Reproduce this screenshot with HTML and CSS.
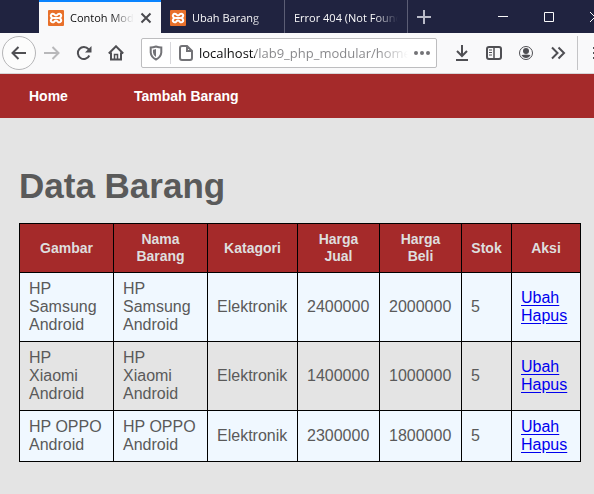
FILE: index.html
```html
<!DOCTYPE html>
<html lang="id">
<head>
<meta charset="utf-8">
<title>Contoh Modular</title>
<link rel="stylesheet" href="styles.css">
</head>
<body>
<svg class="defs" aria-hidden="true">
  <symbol id="xampp" viewBox="0 0 16 16">
    <rect width="16" height="16" rx="1" fill="#e8702a"/>
    <path d="M3 4.6Q4.600 3 6.200 4.300Q8 6.500 9.800 4.300Q11.400 3 13 4.600Q13.800 6.300 11.600 8Q13.800 9.700 13 11.400Q11.400 13 9.800 11.700Q8 9.500 6.200 11.700Q4.600 13 3 11.400Q2.200 9.700 4.400 8Q2.200 6.300 3 4.600M5.200 8H10.800" fill="none" stroke="#fff" stroke-width="2"/>
  </symbol>
</svg>
<header class="browser">
  <div class="tabbar">
    <div class="tab active">
      <svg class="favicon"><use href="#xampp"/></svg>
      <span class="tab-title">Contoh Modular</span>
      <button class="tab-close" aria-label="Tutup tab"><svg width="12" height="12" viewBox="0 0 12 12"><path d="M1.500 1.500 10.500 10.500M10.500 1.500 1.500 10.500"/></svg></button>
    </div>
    <div class="tab">
      <svg class="favicon"><use href="#xampp"/></svg>
      <span class="tab-title">Ubah Barang</span>
    </div>
    <div class="tab divided">
      <span class="tab-title">Error 404 (Not Found)</span>
    </div>
    <button class="new-tab" aria-label="Tab baru"><svg width="14" height="14" viewBox="0 0 14 14"><path d="M7 0V14M0 7H14"/></svg></button>
    <div class="window-buttons">
      <button aria-label="Minimalkan"><svg width="10" height="10" viewBox="0 0 10 10"><path d="M0 4.500H10"/></svg></button>
      <button aria-label="Maksimalkan"><svg width="10" height="10" viewBox="0 0 10 10"><path d="M.5 .5H9.500V9.500H.5Z"/></svg></button>
      <button class="window-close" aria-label="Tutup"><svg width="10" height="10" viewBox="0 0 10 10"><path d="M0 0 10 10M10 0 0 10"/></svg></button>
    </div>
  </div>
  <div class="toolbar">
    <button class="back" aria-label="Kembali"><svg width="16" height="16" viewBox="0 0 16 16"><path d="M15 8H1.500M7.500 2 1.500 8 7.500 14"/></svg></button>
    <button class="tool disabled" aria-label="Maju"><svg width="16" height="16" viewBox="0 0 16 16"><path d="M0 8H14.500M8.500 2 14.500 8 8.500 14"/></svg></button>
    <button class="tool" aria-label="Muat ulang"><svg width="16" height="16" viewBox="0 0 16 16"><path d="M13.300 10.500A6 6 0 1 1 12.500 4.200L14 6"/><path class="solid" d="M15.500 1V7.500H9Z"/></svg></button>
    <button class="tool" aria-label="Beranda"><svg width="16" height="16" viewBox="0 0 16 16"><path d="M.8 8.500 8 1.300 15.200 8.500M3 7.500V14.500H13V7.500"/><path d="M6.500 14V9.500H9.500V14" stroke-width="1.500"/></svg></button>
    <div class="address">
      <svg class="shield" width="16" height="16" viewBox="0 0 16 16"><path d="M8 1.500Q11 2.400 13.300 2.500V7.500Q13 12 8 14.500Q3 12 2.700 7.500V2.500Q5 2.400 8 1.500Z"/><path class="solid" d="M8 4Q6.600 4.600 5 4.700V7.500Q5.200 10.500 8 12Z"/></svg>
      <svg class="page-icon" width="16" height="16" viewBox="0 0 16 16"><path d="M4 1H9L14 6V13Q14 15 12 15H4Q2 15 2 13V3Q2 1 4 1ZM9 1V6H14"/></svg>
      <input class="url" type="text" aria-label="Alamat" value="localhost/lab9_php_modular/home">
      <button class="more" aria-label="Tindakan halaman"><svg width="16" height="4" viewBox="0 0 16 4"><circle cx="2" cy="2" r="2"/><circle cx="8" cy="2" r="2"/><circle cx="14" cy="2" r="2"/></svg></button>
    </div>
    <button class="tool" aria-label="Unduhan"><svg width="16" height="16" viewBox="0 0 16 16"><path d="M8 0V11M3 6 8 11 13 6M2 15H14"/></svg></button>
    <button class="tool" aria-label="Bilah sisi"><svg width="16" height="16" viewBox="0 0 16 16"><rect x="1" y="2" width="14" height="12" rx="2"/><path d="M8 2V14" stroke-width="1.500"/><path d="M3 5H6M3 7.500H6M3 10H6" stroke-width="1"/></svg></button>
    <button class="tool" aria-label="Akun"><svg width="16" height="16" viewBox="0 0 16 16"><circle cx="8" cy="8" r="6.500" stroke-width="1"/><circle class="solid" cx="8" cy="6" r="3"/><path class="solid" d="M3.500 10Q8 9 12.500 10Q11 13 8 13Q5 13 3.500 10Z"/></svg></button>
    <button class="tool" aria-label="Lainnya"><svg width="16" height="16" viewBox="0 0 16 16"><path d="M2 2.500 7.500 8 2 13.500M8.500 2.500 14 8 8.500 13.500"/></svg></button>
    <button class="menu" aria-label="Menu"><svg width="16" height="16" viewBox="0 0 16 16"><path d="M1 3H15M1 8H15M1 13H15"/></svg></button>
  </div>
</header>
<nav class="site-nav">
  <a href="#home">Home</a>
  <a href="#tambah">Tambah Barang</a>
</nav>
<main class="content">
  <h1>Data Barang</h1>
  <table>
    <colgroup><col class="c-text"><col class="c-text"><col class="c-category"><col class="c-price"><col class="c-price"><col class="c-stock"><col class="c-action"></colgroup>
    <thead>
      <tr><th>Gambar</th><th>Nama Barang</th><th>Katagori</th><th>Harga Jual</th><th>Harga Beli</th><th>Stok</th><th>Aksi</th></tr>
    </thead>
    <tbody>
      <tr><td>HP Samsung Android</td><td>HP Samsung Android</td><td>Elektronik</td><td>2400000</td><td>2000000</td><td>5</td><td><a href="#ubah">Ubah</a> <a href="#hapus">Hapus</a></td></tr>
      <tr><td>HP Xiaomi Android</td><td>HP Xiaomi Android</td><td>Elektronik</td><td>1400000</td><td>1000000</td><td>5</td><td><a href="#ubah">Ubah</a> <a href="#hapus">Hapus</a></td></tr>
      <tr><td>HP OPPO Android</td><td>HP OPPO Android</td><td>Elektronik</td><td>2300000</td><td>1800000</td><td>5</td><td><a href="#ubah">Ubah</a> <a href="#hapus">Hapus</a></td></tr>
    </tbody>
  </table>
</main>
</body>
</html>
```
FILE: styles.css
```css
* { box-sizing: border-box; }

body {
  margin: 0;
  min-height: 100vh;
  overflow-x: hidden;
  background: #e4e4e4;
  color: #5a5a5a;
  font: 16px/18px "Liberation Sans", Arial, sans-serif;
}

button {
  display: flex;
  align-items: center;
  justify-content: center;
  flex: none;
  padding: 0;
  border: 0;
  background: none;
  color: inherit;
}

svg { flex: none; fill: none; stroke: currentColor; stroke-width: 2; }
.solid { fill: currentColor; stroke: none; }
.defs { display: none; }

.browser { font-family: "Open Sans", "Noto Sans", sans-serif; }

.tabbar {
  display: flex;
  height: 33px;
  padding-left: 39px;
  overflow: hidden;
  background: #202340;
  color: #f9f9fa;
}

.tab {
  display: flex;
  flex: 0 0 123px;
  align-items: center;
  gap: 6px;
  min-width: 0;
  padding: 2px 9px 0;
  font-size: 11px;
}

.tab.active {
  flex-basis: 122px;
  padding-top: 0;
  border-top: 2px solid #0a84ff;
  background: #f9f9fa;
  color: #0c0c0d;
}

.tab.divided {
  flex-basis: 124px;
  border: solid #5c5e75;
  border-width: 0 1px;
}

.favicon { width: 16px; height: 16px; stroke: none; }

.tab-title {
  flex: 1;
  min-width: 0;
  overflow: hidden;
  white-space: nowrap;
  mask-image: linear-gradient(to left, transparent, #000 24px);
}

.tab-close { width: 12px; color: #4a4a4f; }
.new-tab { width: 32px; color: #b9bac8; }
.window-buttons { display: flex; margin-left: auto; margin-right: -24px; }
.window-buttons button { width: 46px; }
.window-buttons svg { stroke-width: 1; }

.toolbar {
  display: flex;
  align-items: center;
  height: 41px;
  padding-left: 2px;
  overflow: hidden;
  border-bottom: 1px solid #d6d6d8;
  background: #f9f9fa;
  color: #4f4f53;
}

.back {
  width: 34px;
  height: 34px;
  border: 1px solid #b5b5b7;
  border-radius: 50%;
  background: #fcfcfc;
}

.tool { width: 32px; height: 32px; }
.disabled { color: #b8b8ba; }

.address {
  display: flex;
  flex: 1;
  align-items: center;
  min-width: 0;
  height: 30px;
  margin: 0 9px;
  padding: 0 6px;
  border: 1px solid #bdbdbf;
  border-radius: 2px;
  background: #fff;
  color: #737377;
}

.page-icon {
  width: 24px;
  height: 22px;
  margin: 0 5px 0 6px;
  padding: 3px 0 3px 7px;
  border-left: 1px solid #d7d7db;
}

.url {
  flex: 1;
  min-width: 0;
  padding: 0;
  border: 0;
  outline: 0;
  background: linear-gradient(to right, #0c0c0d 56px, #858588 56px, #858588 calc(100% - 30px), transparent);
  background-clip: text;
  color: transparent;
  font: 13px/20px "Open Sans", "Noto Sans", sans-serif;
}

.more { width: 16px; margin-left: 6px; }
.more svg { fill: currentColor; stroke: none; }

.menu {
  justify-content: flex-start;
  width: 17px;
  height: 34px;
  margin-left: 3px;
  padding-left: 14px;
  overflow: hidden;
  border-left: 1px solid #c4c4c6;
}

.site-nav {
  display: flex;
  background: #a52a2a;
}

.site-nav a {
  padding: 13px 37px 13px 29px;
  color: #fff;
  font-size: 14px;
  font-weight: bold;
  text-decoration: none;
}

.content { padding: 48px 13px 32px 19px; }

h1 {
  margin: 0 0 17px;
  font-size: 35px;
  line-height: 40px;
}

table {
  width: 100%;
  table-layout: fixed;
  border-collapse: collapse;
}

.c-text { width: 94px; }
.c-category { width: 90px; }
.c-price { width: 82px; }
.c-stock { width: 50px; }
.c-action { width: 69px; }

th, td {
  padding: 7px 9px;
  border: 1px solid #000;
  text-align: left;
}

th {
  background: #a52a2a;
  color: #dedede;
  font-size: 14px;
  line-height: 17px;
  text-align: center;
}

tbody tr:nth-child(odd) { background: #f0f8ff; }
td a { color: #00e; text-underline-offset: 2px; }
```
